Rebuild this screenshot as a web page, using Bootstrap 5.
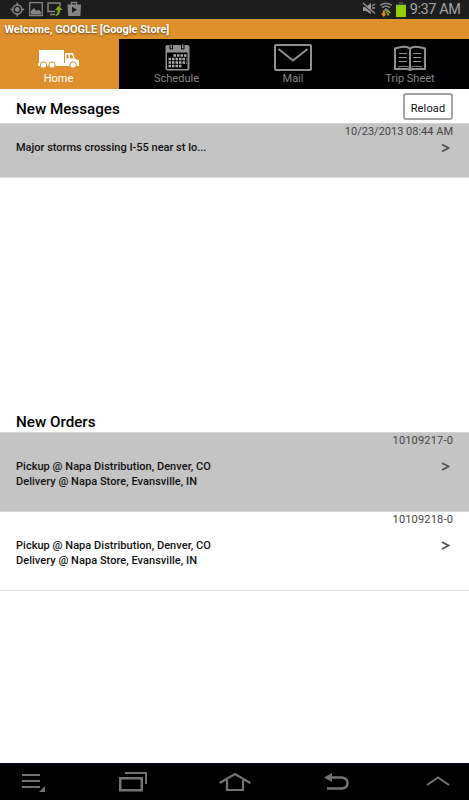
<!DOCTYPE html>
<html lang="en">
<head>
<meta charset="utf-8">
<meta name="viewport" content="width=device-width, initial-scale=1">
<title>Home</title>
<link href="https://cdn.jsdelivr.net/npm/bootstrap@5.3.0/dist/css/bootstrap.min.css" rel="stylesheet">
<style>
body{font-family:Roboto,"Liberation Sans",sans-serif;font-size:11px;line-height:15px;color:#111;overflow:hidden}
svg{display:block;flex:none}
.screen{height:800px;background:#fff}
.status{height:19px;background:#1d1d1d;padding:0 8.500px 0 10px;border-bottom:1px solid #16202a}
.clock{font-size:14.500px;letter-spacing:-.42px;line-height:19px;color:#a3a3a3}
.welcome{height:20px;background:#dd902b;color:#fff;font-size:10.900px;font-weight:700;line-height:21px;padding-left:4.500px;text-shadow:0 1px 2px #0008}
.tabs{height:50px;background:#000}
.tab{color:#858585;line-height:14px;padding-top:3px;width:116px;flex:1}
.tab:hover{color:#aaa}
.tab span{padding-top:1px}
.tab.active{background:#dd902b;color:#fff;flex:0 0 119px;padding-right:2px}
.tab.schedule{flex:0 0 116px;padding-right:1px}
.tab.mail{flex:0 0 116px}
.head{height:34px;padding:0 16px}
.title{font-size:15.200px;font-weight:500;line-height:20px;color:#000;margin:0;padding-top:10px}
.reload{width:50px;height:27px;border:2px solid #a3a3a3;border-radius:3px;background:#fff;letter-spacing:.15px;line-height:14px;padding:4px 0 0;color:#111}
.entry{border-top:1px solid #d2d2d2;padding:0 16px;font-weight:500}
.shade{background:#c4c4c4}
.message{height:55px;border-bottom:1px solid #ddd}
.order{height:79px;letter-spacing:.04px}
.order .meta{letter-spacing:.18px;padding-bottom:11px}
.order.plain{height:80px;border-bottom:1px solid #ddd}
.meta{font-weight:400;color:#444;text-align:right}
.message .meta{padding-bottom:1px}
.chev{color:#555;margin-right:3px}
.messages{height:309px}
.orders-title{padding-top:14px}
.bottom{height:37px;background:#000;border-top:1px solid #0b0b30;color:#737373;padding-left:22px}
.recent{margin-left:74px}
.house{margin-left:72px}
.back{margin-left:73px}
.up{margin-left:77px}
</style>
<script src="https://cdn.jsdelivr.net/npm/bootstrap@5.3.0/dist/js/bootstrap.bundle.min.js"></script>
</head>
<body>
<div class="screen d-flex flex-column">
<header class="status d-flex justify-content-between align-items-center">
<div class="d-flex align-items-center gap-1">
<svg width="15" height="16" viewBox="0 0 15 16" fill="none" stroke="#858585"><circle cx="7.200" cy="8.500" r="4.600" stroke-width="1.500"/><circle cx="7.200" cy="8.500" r="2.400" fill="#858585" stroke="none"/><path d="M7.200 1.500v3M7.200 12.500v3M.5 8.500h3M11 8.500h3" stroke-width="1.500"/></svg>
<svg width="14" height="16" viewBox="0 0 14 16"><path d="M.7 1.700h12.600v13H.7z" fill="none" stroke="#858585" stroke-width="1.300"/><path d="M2 13.500V10l3-3 2.500 3 2-1.500L12 11v2.500z" fill="#858585"/></svg>
<svg width="16" height="16" viewBox="0 0 16 16"><path d="M8 10.500H1V2h12v3M3 13.500h5" fill="none" stroke="#858585" stroke-width="1.500"/><path d="M8 9l3.800-4.500L15.500 9H13q.5 5.500-4.500 6v-1.500Q11 13 10.500 9z" fill="#80aa18"/></svg>
<svg width="15" height="16" viewBox="0 0 15 16"><path d="M.5 3.500h13.500l-.6 11.500H1.200z" fill="#858585"/><path d="M4.500 4V1.500h5V4" fill="none" stroke="#858585" stroke-width="1.300"/><path d="M5 5.700v6l5-3z" fill="#1d1d1d"/></svg>
</div>
<div class="d-flex align-items-center">
<svg class="me-1" width="14" height="14" viewBox="0 0 14 14"><path d="M1 5h3l5-4v11L4 9H1z" fill="#959595"/><path d="M1 2.500l12 10" stroke="#1d1d1d" stroke-width="1.200"/><path d="M1 1l12 10.500M10 6h3M10 4l3-2" stroke="#959595" stroke-width="1.300"/></svg>
<svg class="me-1" width="12" height="16" viewBox="0 0 12 16" fill="none"><path d="M.3 4.300Q6 0 11.700 4.300M2 6.700q4-3.500 8 0" stroke="#858585" stroke-width="1.500"/><path d="M4 8.500L6 7l2 1.500L6 11z" fill="#858585"/><path d="M1 12.500h5.500L3.800 16zM2.800 9.500h2v3h-2z" fill="#e58b22"/><path d="M5.500 12h5.500L8.200 8.500zM7.200 11.500h2v3h-2z" fill="#80aa18"/></svg>
<svg class="me-1" width="10" height="16" viewBox="0 0 10 16"><path d="M3 1h4v2h3v3H0V3h3z" fill="#444"/><path d="M0 4h10v12H0z" fill="#8fd000"/></svg>
<span class="clock">9:37 AM</span>
</div>
</header>
<div class="welcome">Welcome, GOOGLE [Google Store]</div>
<nav class="tabs d-flex">
<a class="tab active d-flex flex-column align-items-center text-decoration-none" href="#"><svg width="42" height="29" viewBox="0 0 42 29"><path d="M1 8h25v13h1V11h8l2 6 4 1v6H0v-3h1z" fill="#fff"/><path d="M28.500 12.500h2v4h-2zM32 12.500h2l1.500 4H32z" fill="#dd902b"/><g fill="#fff" stroke="#dd902b"><circle cx="5.500" cy="23" r="3.200"/><circle cx="14" cy="23" r="3.200"/><circle cx="35" cy="23" r="3.200"/></g></svg><span>Home</span></a>
<a class="tab schedule d-flex flex-column align-items-center text-decoration-none" href="#"><svg width="26" height="29" viewBox="0 0 26 29"><rect x="1.500" y="3" width="24" height="25.500" rx="2" fill="#919191"/><path d="M3 10.500h20.500V27H3z" fill="#000"/><path d="M6 2v5h2.500V2zM17.500 2v5H20V2z" fill="#919191" stroke="#000"/><g stroke="#aaa" stroke-width="2.500" stroke-dasharray="2.500 1"><path d="M9.500 13.500h13M4.500 17h18M4.500 20.500h18M4.500 24h13"/></g></svg><span>Schedule</span></a>
<a class="tab mail d-flex flex-column align-items-center text-decoration-none" href="#"><svg width="38" height="29" viewBox="0 0 38 29" fill="none" stroke="#919191" stroke-width="2"><rect x="1" y="3" width="36" height="25" rx="1"/><path d="M4.500 7L19 18.500 33.500 7"/></svg><span>Mail</span></a>
<a class="tab d-flex flex-column align-items-center text-decoration-none" href="#"><svg width="32" height="29" viewBox="0 0 32 29" fill="none" stroke="#919191" stroke-width="2"><path d="M1 27V6.500Q12 3 16 6.500 20 3 31 6.500V27H18.500l-2.500 1-2.500-1zM16 6v22"/><path d="M4 25q9-2 12 1 3-3 12-1" stroke-width="1"/><path d="M5 11.500h8M5 15.500h8M5 19.500h8M19 11.500h8M19 15.500h8M19 19.500h8" stroke-width="1"/></svg><span>Trip Sheet</span></a>
</nav>
<section class="messages">
<div class="head d-flex justify-content-between"><h1 class="title">New Messages</h1><button class="reload mt-1">Reload</button></div>
<div class="entry message shade"><div class="meta">10/23/2013 08:44 AM</div><div class="d-flex justify-content-between"><span>Major storms crossing I-55 near st lo...</span><svg class="chev" width="9" height="15" viewBox="0 0 9 15"><path d="M1 4.500l6.500 3.500L1 11.500" fill="none" stroke="currentColor" stroke-width="1.900"/></svg></div></div>
</section>
<section class="flex-fill">
<div class="head"><h2 class="title orders-title">New Orders</h2></div>
<div class="entry order shade"><div class="meta">10109217-0</div><div class="d-flex justify-content-between"><div>Pickup @ Napa Distribution, Denver, CO<br>Delivery @ Napa Store, Evansville, IN</div><svg class="chev" width="9" height="15" viewBox="0 0 9 15"><path d="M1 4l6.500 3.500L1 11" fill="none" stroke="currentColor" stroke-width="1.900"/></svg></div></div>
<div class="entry order plain"><div class="meta">10109218-0</div><div class="d-flex justify-content-between"><div>Pickup @ Napa Distribution, Denver, CO<br>Delivery @ Napa Store, Evansville, IN</div><svg class="chev" width="9" height="15" viewBox="0 0 9 15"><path d="M1 4l6.500 3.500L1 11" fill="none" stroke="currentColor" stroke-width="1.900"/></svg></div></div>
</section>
<footer class="bottom d-flex align-items-center">
<svg width="23" height="20" viewBox="0 0 23 20"><path d="M0 3h18M0 9h18M0 15h18" stroke="currentColor" stroke-width="2"/><path d="M23 14v6h-6z" fill="currentColor"/></svg>
<svg class="recent" width="28" height="20" viewBox="0 0 28 20" fill="none" stroke="currentColor" stroke-width="2"><path d="M6 1h21v11"/><path d="M1.250 6.250h21.500v12h-21.500z" stroke-width="2.500"/></svg>
<svg class="house" width="32" height="20" viewBox="0 0 32 20" fill="none" stroke="currentColor" stroke-width="2.200"><path d="M.7 11L16 2l15.300 9M8 8v10h16V8"/></svg>
<svg class="back" width="25" height="20" viewBox="0 0 25 20"><path d="M7 5.500h11q5.500.5 5.500 5.500t-5.500 5.500H3" fill="none" stroke="currentColor" stroke-width="2.500"/><path d="M0 5.500L8 1v9z" fill="currentColor"/></svg>
<svg class="up" width="24" height="20" viewBox="0 0 24 20"><path d="M1 13L12 5.500 23 13" fill="none" stroke="currentColor" stroke-width="2"/></svg>
</footer>
</div>
</body></html>
